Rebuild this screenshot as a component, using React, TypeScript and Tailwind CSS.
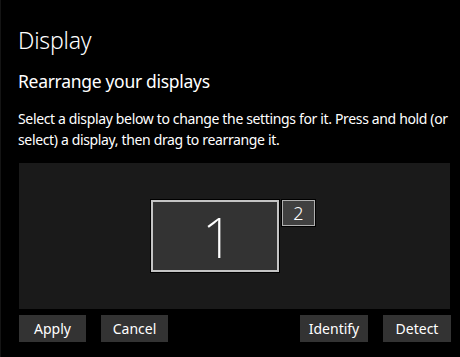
export default function App() {
  return (
    <div
      className="w-[460px] h-[357px] bg-black text-white overflow-hidden border-l border-[#141414]"
      style={{ fontFamily: '"Noto Sans", "Open Sans", sans-serif' }}
    >
      <div className="pl-[17px] pr-[10px]">
        <h1 className="pt-[26px] text-[23px] leading-[28px] font-light tracking-[-0.2px]">Display</h1>
        <h2 className="mt-[16px] text-[17.5px] leading-[22px] font-normal tracking-[-0.3px]">
          Rearrange your displays
        </h2>
        <p className="mt-[16px] text-[14px] leading-[21px] whitespace-nowrap tracking-[-0.35px]">
          Select a display below to change the settings for it. Press and hold (or
          <br />
          select) a display, then drag to rearrange it.
        </p>
      </div>

      {/* Arrangement canvas */}
      <div className="ml-[18px] mt-[13px] w-[431px] h-[146px] bg-[#1a1a1a] relative">
        <div className="absolute left-[131px] top-[36px] w-[130px] h-[74px] border border-black">
          <div className="w-full h-full border-2 border-[#c4c4c4] bg-[#333333] flex items-center justify-center">
            <span className="text-[56px] leading-none font-extralight text-white pl-[6px]">1</span>
          </div>
        </div>
        <div className="absolute left-[262px] top-[36px] w-[35px] h-[28px] border border-black">
          <div className="w-full h-full border border-[#b0b0b0] bg-[#404040] flex items-center justify-center">
            <span className="text-[18px] leading-none font-light text-white">2</span>
          </div>
        </div>
      </div>

      {/* Actions */}
      <div className="ml-[18px] mt-[6px] w-[432px] flex items-center">
        <button className="w-[67px] h-[27px] bg-[#333333] text-[14px] text-white">Apply</button>
        <button className="ml-[15px] w-[67px] h-[27px] bg-[#333333] text-[14px] text-white">Cancel</button>
        <div className="flex-1" />
        <button className="w-[68px] h-[27px] bg-[#333333] text-[14px] text-white">Identify</button>
        <button className="ml-[15px] w-[68px] h-[27px] bg-[#333333] text-[14px] text-white">Detect</button>
      </div>
    </div>
  );
}
